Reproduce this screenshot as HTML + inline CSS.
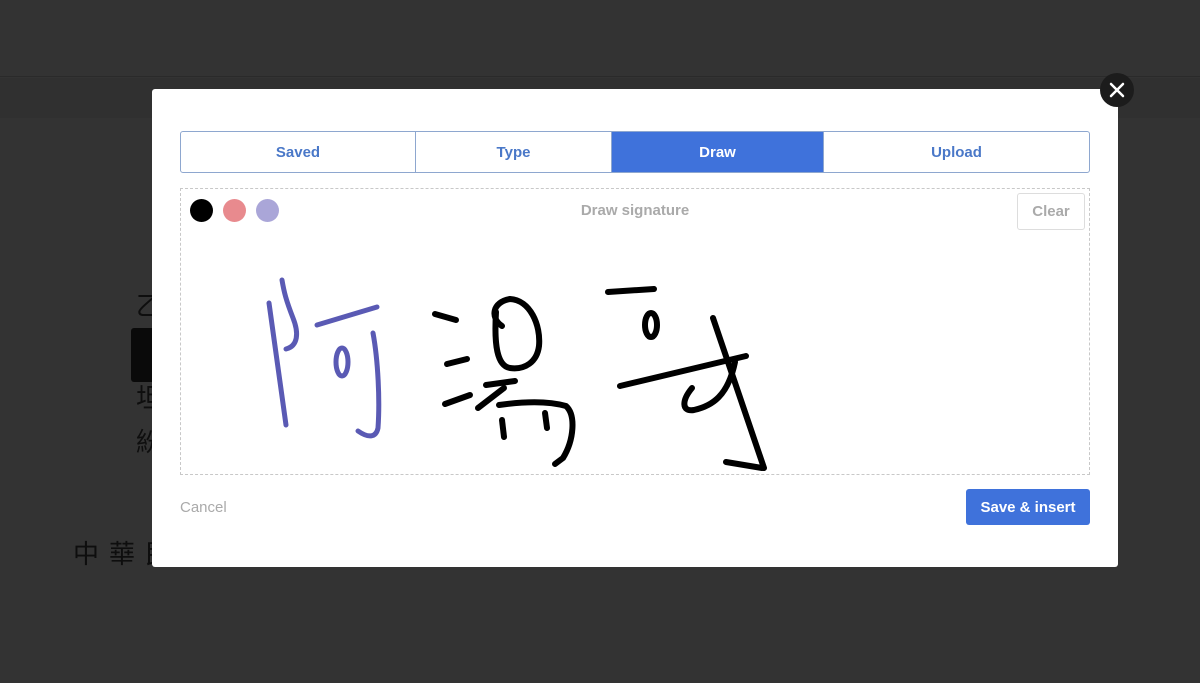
<!DOCTYPE html>
<html><head><meta charset="utf-8"><style>
*{box-sizing:border-box;margin:0;padding:0}
body{width:1200px;height:683px;background:#333;position:relative;overflow:hidden;font-family:"Liberation Sans","Noto Sans CJK TC",sans-serif}
.topbar{position:absolute;left:0;top:0;width:1200px;height:77px;background:#333;border-bottom:1px solid #2a2a2a}
.band{position:absolute;left:0;top:78px;width:1200px;height:40px;background:#303030}
.bg{position:absolute;color:#0e0e0e;font-size:26px}
.modal{position:absolute;left:152px;top:89px;width:966px;height:478px;background:#fff;border-radius:3px}
.tabs{position:absolute;left:28px;top:42px;width:910px;height:42px;border:1px solid #8ea7cf;border-radius:3px;display:flex;overflow:hidden}
.tab{height:100%;display:flex;align-items:center;justify-content:center;color:#4a78c8;font-weight:bold;font-size:15px;border-right:1px solid #8ea7cf}
.tab:last-child{border-right:none}
.tab.on{background:#3f72db;color:#fff}
.pad{position:absolute;left:28px;top:99px;width:910px;height:287px;border:1px dashed #c8c8c8}
.dot{position:absolute;top:10px;width:23px;height:23px;border-radius:50%}
.clear{position:absolute;right:4px;top:4px;width:68px;height:37px;border:1px solid #ddd;border-radius:3px;color:#aaa;font-size:15px;font-weight:bold;display:flex;align-items:center;justify-content:center}
.lbl{position:absolute;left:0;width:100%;top:13px;text-align:center;color:#aaa;font-size:15px;font-weight:bold}
.cancel{position:absolute;left:28px;top:410px;color:#aaa;font-size:15px}
.save{position:absolute;left:814px;top:400px;width:124px;height:36px;background:#3f72db;border-radius:3px;color:#fff;font-weight:bold;font-size:15px;display:flex;align-items:center;justify-content:center}
</style></head><body>
<div class="topbar"></div><div class="band"></div>
<div class="bg" style="left:136px;top:286px">乙</div>
<div style="position:absolute;left:131px;top:328px;width:30px;height:54px;background:#0a0a0a;border-radius:3px"></div>
<div class="bg" style="left:136px;top:378px">坦</div>
<div class="bg" style="left:136px;top:422px">紛</div>
<div class="bg" style="left:73px;top:534px;letter-spacing:10px">中華民</div>
<div class="modal">
<div class="tabs"><div class="tab" style="width:235px">Saved</div><div class="tab" style="width:196px">Type</div><div class="tab on" style="width:212px">Draw</div><div class="tab" style="flex:1">Upload</div></div>
<div class="pad">
<div class="dot" style="left:9px;background:#000"></div>
<div class="dot" style="left:42px;background:#e88a8e"></div>
<div class="dot" style="left:75px;background:#aaa6d8"></div>
<div class="lbl">Draw signature</div>
<div class="clear">Clear</div>
</div>
<div class="cancel">Cancel</div>
<div class="save">Save &amp; insert</div>
</div>
<svg style="position:absolute;left:0;top:0" width="1200" height="683" fill="none" stroke-linecap="round" stroke-linejoin="round">
<g stroke="#5a5ab4" stroke-width="5">
<path d="M269 303 L286 425"/>
<path d="M282 280 C284 292 286 300 293 318 C299 333 298 346 286 349"/>
<path d="M317 325 L377 307"/>
<ellipse cx="342" cy="362" rx="6" ry="14"/>
<path d="M373 333 C378 360 380 400 378 428 C376 438 368 438 358 431"/>
</g>
<g stroke="#000" stroke-width="6">
<path d="M435 314 L456 320"/>
<path d="M447 364 L467 359"/>
<path d="M445 404 L470 395"/>
<path d="M502 326 C490 318 492 302 510 299 C530 300 541 325 539 346 C537 362 525 370 510 368 C497 366 494 345 496 312"/>
<path d="M478 408 L504 388"/>
<path d="M486 385 L515 381"/>
<path d="M499 405 C520 402 545 400 566 406 C576 415 574 440 563 458 L555 464"/>
<path d="M502 420 L504 437"/>
<path d="M545 413 L547 428"/>
<path d="M608 292 L654 289"/>
<ellipse cx="651" cy="325" rx="6" ry="12"/>
<path d="M620 386 L746 356"/>
<path d="M692 388 C682 400 681 412 694 410 C712 406 728 396 735 362"/>
<path d="M713 318 L764 468"/>
<path d="M726 462 L762 468"/>
</g>
<circle cx="1117" cy="90" r="17" fill="#1c1c1c"/>
<path d="M1111 84 L1123 96 M1123 84 L1111 96" stroke="#fff" stroke-width="2.5"/>
</svg>
</body></html>
